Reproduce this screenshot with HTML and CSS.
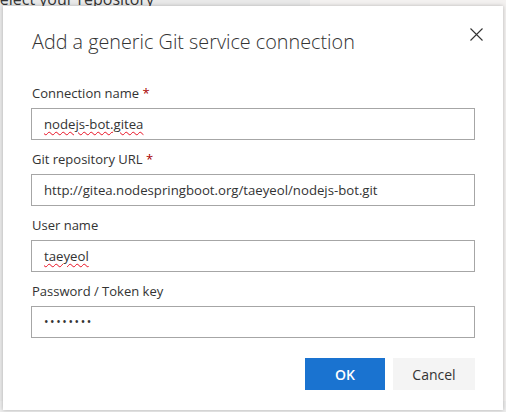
FILE: index.html
```html
<!DOCTYPE html>
<html lang="en">
<head>
<meta charset="utf-8">
<title>Add a generic Git service connection</title>
<link rel="stylesheet" href="styles.css">
</head>
<body>
<div class="backdrop">
  <div class="bg-title">Select your repository</div>
</div>
<div class="dialog" role="dialog">
  <div class="dialog-header">
    <h1 class="dialog-title">Add a generic Git service connection</h1>
    <button class="close" aria-label="Close">
      <svg width="13" height="13" viewBox="0 0 13 13"><path d="M0.5 0.5 L12.5 12.5 M12.5 0.5 L0.5 12.5" stroke="#333" stroke-width="1.1" fill="none"/></svg>
    </button>
  </div>
  <div class="form">
    <div class="field">
      <label class="label">Connection name <span class="req">*</span></label>
      <div class="input"><span class="squiggle">nodejs-bot.gitea</span></div>
    </div>
    <div class="field">
      <label class="label">Git repository URL <span class="req">*</span></label>
      <div class="input">http://gitea.nodespringboot.org/taeyeol/nodejs-bot.git</div>
    </div>
    <div class="field">
      <label class="label">User name</label>
      <div class="input"><span class="squiggle">taeyeol</span></div>
    </div>
    <div class="field">
      <label class="label">Password / Token key</label>
      <div class="input pw">••••••••</div>
    </div>
  </div>
  <div class="footer">
    <button class="btn primary">OK</button>
    <button class="btn">Cancel</button>
  </div>
</div>
</body>
</html>
```
FILE: styles.css
```css
html, body {
  margin: 0;
  padding: 0;
}
body {
  width: 506px;
  height: 412px;
  overflow: hidden;
  background: #ededed;
  font-family: "Open Sans", "Noto Sans", sans-serif;
  position: relative;
}
.backdrop {
  height: 412px;
  background: linear-gradient(to right, #e9e9e9 0, #e9e9e9 310px, #f3f1f0 310px);
}
.bg-title {
  font-size: 16px;
  color: #333;
  margin-left: -9px;
  margin-top: -11px;
  line-height: 20px;
}
.dialog {
  position: absolute;
  left: 3px;
  top: 6px;
  width: 500px;
  height: 404px;
  background: #fff;
  box-shadow: 0 0 4px rgba(0,0,0,0.25);
  box-sizing: border-box;
  padding: 0 28px 0 28px;
  display: flex;
  flex-direction: column;
}
.dialog-header {
  display: flex;
  justify-content: space-between;
  align-items: flex-start;
  padding-top: 22px;
  height: 52px;
  box-sizing: border-box;
}
.dialog-title {
  margin: 0 0 0 1px;
  font-size: 19.8px;
  font-weight: 300;
  color: #333;
  line-height: 28px;
}
.close {
  border: 0;
  background: none;
  padding: 0;
  margin: -6px -13px 0 0;
  width: 24px;
  height: 24px;
  display: flex;
  align-items: center;
  justify-content: center;
}
.form {
  display: flex;
  flex-direction: column;
  gap: 10px;
  padding-top: 26px;
}
.field {
  display: flex;
  flex-direction: column;
}
.label {
  font-size: 13px;
  color: #333;
  line-height: 18px;
  height: 18px;
  margin: 0 0 6px 1px;
}
.req {
  color: #a80000;
}
.input {
  height: 32px;
  border: 1px solid #a6a6a6;
  box-sizing: border-box;
  padding: 0 12px;
  font-size: 13.2px;
  color: #333;
  line-height: 30px;
  white-space: nowrap;
}
.squiggle {
  text-decoration: underline wavy #e81123;
  text-decoration-thickness: 1px;
  text-underline-offset: 2px;
}
.pw {
  letter-spacing: 1.6px;
  font-size: 12px;
}
.footer {
  display: flex;
  justify-content: flex-end;
  gap: 8px;
  margin-top: 20px;
}
.btn {
  width: 82px;
  height: 32px;
  border: 0;
  background: #f4f4f4;
  color: #333;
  font-family: inherit;
  font-size: 14px;
  padding: 0;
}
.btn.primary {
  width: 80px;
  background: #1a73d0;
  color: #fff;
  font-weight: 600;
}
```
